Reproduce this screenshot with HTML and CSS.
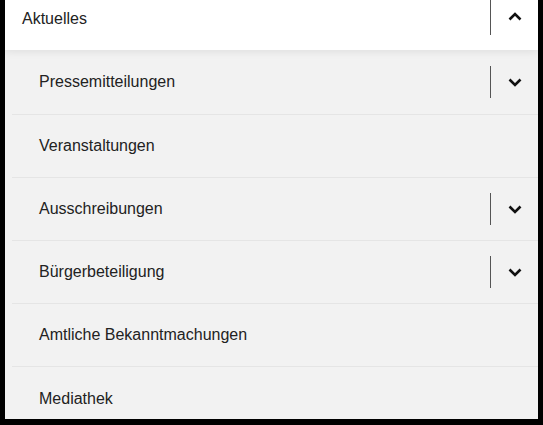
FILE: index.html
```html
<!DOCTYPE html>
<html lang="de">
<head>
<meta charset="utf-8">
<title>Aktuelles</title>
<link rel="stylesheet" href="styles.css">
</head>
<body>
<nav class="menu">
  <div class="menu-head">
    <span class="menu-title">Aktuelles</span>
    <button class="toggle toggle-head" aria-label="Zuklappen">
      <svg width="14" height="9" viewBox="0 0 14 9"><path d="M1.5 7.5 L7 2 L12.5 7.5" fill="none" stroke="#111" stroke-width="2.6"/></svg>
    </button>
  </div>
  <ul class="sub">
    <li class="row"><span class="label">Pressemitteilungen</span>
      <button class="toggle" aria-label="Aufklappen"><svg width="14" height="9" viewBox="0 0 14 9"><path d="M1.5 1.5 L7 7 L12.5 1.5" fill="none" stroke="#111" stroke-width="2.6"/></svg></button></li>
    <li class="row"><span class="label">Veranstaltungen</span></li>
    <li class="row"><span class="label">Ausschreibungen</span>
      <button class="toggle" aria-label="Aufklappen"><svg width="14" height="9" viewBox="0 0 14 9"><path d="M1.5 1.5 L7 7 L12.5 1.5" fill="none" stroke="#111" stroke-width="2.6"/></svg></button></li>
    <li class="row"><span class="label">Bürgerbeteiligung</span>
      <button class="toggle" aria-label="Aufklappen"><svg width="14" height="9" viewBox="0 0 14 9"><path d="M1.5 1.5 L7 7 L12.5 1.5" fill="none" stroke="#111" stroke-width="2.6"/></svg></button></li>
    <li class="row"><span class="label">Amtliche Bekanntmachungen</span></li>
    <li class="row"><span class="label">Mediathek</span></li>
  </ul>
</nav>
</body>
</html>
```
FILE: styles.css
```css
html, body {
  margin: 0;
  padding: 0;
  background: #000;
  height: 100%;
}
body {
  padding: 0 5px 6px 5px;
  box-sizing: border-box;
  font-family: "Liberation Sans", Arial, sans-serif;
  font-size: 16px;
  color: #222;
}
.menu {
  background: #f2f2f2;
  height: 419px;
  overflow: hidden;
}
.menu-head {
  position: relative;
  z-index: 1;
  height: 50px;
  background: #fff;
  display: flex;
  align-items: flex-start;
  box-shadow: 0 2px 8px rgba(0,0,0,0.08);
}
.menu-title {
  padding-left: 17px;
  line-height: 38px;
}
.toggle {
  margin-left: auto;
  border: 0;
  background: transparent;
  border-left: 1px solid #555;
  width: 48px;
  height: 32px;
  padding: 0 0 0 1px;
  display: flex;
  align-items: center;
  justify-content: center;
  cursor: pointer;
}
.toggle-head {
  height: 35px;
  align-self: flex-start;
}
.toggle-head svg {
  margin-top: -2px;
}
.sub {
  list-style: none;
  margin: 0;
  padding: 0 0 0 7px;
}
.row {
  height: 63px;
  display: flex;
  align-items: center;
  border-bottom: 1px solid #e5e5e5;
  box-sizing: border-box;
}
.row:first-child {
  height: 65px;
}
.row:last-child {
  border-bottom: 0;
}
.label {
  padding-left: 27px;
}
```
